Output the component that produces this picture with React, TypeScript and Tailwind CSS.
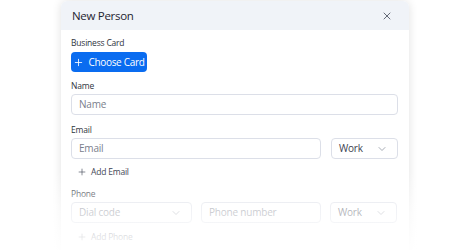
import { Plus, X, ChevronDown } from 'lucide-react';

function Select({ label, className }: { label: string; className: string }) {
  return (
    <div className={`h-[21px] rounded-[4px] border border-[#dcdfe8] flex items-center justify-between pl-[7px] pr-[9px] text-[10px] tracking-[-0.2px] ${className}`}>
      <span>{label}</span>
      <ChevronDown className="w-3 h-3 text-[#8a909c]" strokeWidth={1.5} />
    </div>
  );
}

function Input({ placeholder, className }: { placeholder: string; className: string }) {
  return (
    <div className={`h-[21px] rounded-[4px] border border-[#dcdfe8] flex items-center px-[7px] text-[10px] tracking-[-0.2px] text-[#7a808c] ${className}`}>
      {placeholder}
    </div>
  );
}

export default function App() {
  return (
    <div
      className="relative w-[471px] h-[250px] overflow-hidden bg-white"
      style={{ fontFamily: '"Open Sans", "Noto Sans", sans-serif' }}
    >
      <div className="ml-[61px] mt-[1px] w-[348px] rounded-t-[6px] bg-white shadow-[0_0_10px_rgba(0,0,0,0.12)]">
        {/* Header */}
        <div className="h-[29px] rounded-t-[6px] bg-[#f0f3f8] flex items-center justify-between pl-[11px] pr-[16px]">
          <span className="text-[11.5px] tracking-[-0.3px] text-[#1f2430]">New Person</span>
          <X className="w-[12px] h-[12px] text-[#4a5060]" strokeWidth={1.7} />
        </div>

        <div className="px-[10px] pt-[7px] pb-[20px]">
          <div className="text-[8.5px] tracking-[-0.2px] text-[#2f3440] leading-[12px]">Business Card</div>
          <button className="mt-[3px] h-[20px] w-[76px] rounded-[4px] bg-[#0a6cf0] text-white text-[10px] tracking-[-0.3px] flex items-center justify-center gap-[4px]">
            <Plus className="w-[11px] h-[11px]" strokeWidth={1.8} />
            Choose Card
          </button>

          <div className="mt-[8px] text-[8.5px] tracking-[-0.2px] text-[#2f3440] leading-[12px]">Name</div>
          <Input placeholder="Name" className="mt-[2px] w-[327px]" />

          <div className="mt-[9px] text-[8.5px] tracking-[-0.2px] text-[#2f3440] leading-[12px]">Email</div>
          <div className="mt-[2px] flex gap-[10px]">
            <Input placeholder="Email" className="w-[250px]" />
            <Select label="Work" className="w-[67px] text-[#3b4150]" />
          </div>
          <div className="mt-[6px] h-[14px] flex items-center gap-[4px] pl-[6px] text-[8.5px] tracking-[-0.2px] text-[#3b4150]">
            <Plus className="w-[10px] h-[10px]" strokeWidth={1.5} />
            Add Email
          </div>

          <div className="mt-[9px] text-[8.5px] tracking-[-0.2px] text-[#2f3440] leading-[12px]">Phone</div>
          <div className="mt-[2px] flex gap-[9px]">
            <Select label="Dial code" className="w-[121px] text-[#7a808c]" />
            <Input placeholder="Phone number" className="w-[120px]" />
            <Select label="Work" className="w-[67px] text-[#3b4150]" />
          </div>
          <div className="mt-[7px] h-[14px] flex items-center gap-[4px] pl-[6px] text-[8.5px] tracking-[-0.2px] text-[#3b4150]">
            <Plus className="w-[10px] h-[10px]" strokeWidth={1.5} />
            Add Phone
          </div>
        </div>
      </div>

      {/* fade */}
      <div className="absolute left-0 right-0 bottom-0 h-[80px] bg-gradient-to-b from-white/0 via-white/60 to-white/95" />
    </div>
  );
}
